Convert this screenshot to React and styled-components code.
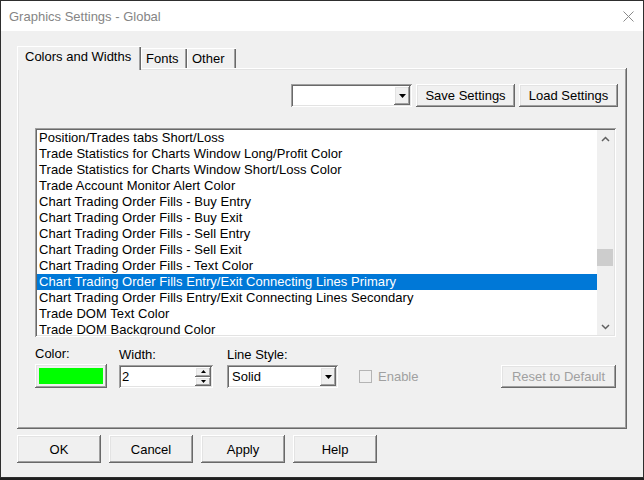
import React from "react";
import styled, { createGlobalStyle } from "styled-components";

const GlobalStyle = createGlobalStyle`
  html, body {
    margin: 0;
    padding: 0;
    background: #1f1f1f;
  }
  body {
    font-family: "Liberation Sans", Arial, sans-serif;
    font-size: 13px;
    color: #000;
  }
`;

// classic 3D edges
const raised = `
  box-shadow: inset -1px -1px #696969, inset 1px 1px #ffffff,
    inset -2px -2px #a0a0a0, inset 2px 2px #e3e3e3;
`;
const sunken = `
  box-shadow: inset 1px 1px #a0a0a0, inset -1px -1px #ffffff,
    inset 2px 2px #696969, inset -2px -2px #e3e3e3;
`;

const Window = styled.div`
  width: 644px;
  height: 478px;
  box-sizing: border-box;
  border: 1px solid #2e2e2e;
  background: #f0f0f0;
  display: flex;
  flex-direction: column;
`;

const TitleBar = styled.div`
  height: 30px;
  background: #fff;
  display: flex;
  align-items: center;
  justify-content: space-between;
  padding: 0 9px 0 8px;
`;

const Title = styled.span`
  font-size: 13px;
  color: #858585;
`;

const Body = styled.div`
  flex: 1;
  display: flex;
  flex-direction: column;
  padding: 15px 0 0 16px;
`;

const TabStrip = styled.div`
  display: flex;
  align-items: flex-start;
  height: 22px;
  position: relative;
  z-index: 1;
`;

const Tab = styled.div`
  box-sizing: border-box;
  width: ${(p) => p.$w}px;
  height: ${(p) => (p.$active ? 24 : 20)}px;
  margin-top: ${(p) => (p.$active ? 0 : 2)}px;
  padding-left: ${(p) => (p.$active ? 8 : 5)}px;
  padding-top: 3px;
  background: #f0f0f0;
  box-shadow: inset 1px 0 #ffffff, inset 0 1px #ffffff, inset -1px 0 #696969,
    inset -2px 0 #a0a0a0;
  white-space: nowrap;
`;

const Panel = styled.div`
  width: 610px;
  height: 361px;
  box-sizing: border-box;
  ${raised}
  display: flex;
  flex-direction: column;
  padding: 16px 0 0 18px;
`;

const Toolbar = styled.div`
  width: 583px;
  height: 23px;
  display: flex;
  justify-content: flex-end;
  gap: 4px;
`;

const Button = styled.button`
  box-sizing: border-box;
  width: ${(p) => p.$w}px;
  height: ${(p) => p.$h || 23}px;
  border: none;
  padding: 0;
  margin: 0;
  background: #f0f0f0;
  ${raised}
  font-family: "Liberation Sans", Arial, sans-serif;
  font-size: 13px;
  color: ${(p) => (p.disabled ? "#a0a0a0" : "#000")};
`;

const Combo = styled.div`
  box-sizing: border-box;
  width: ${(p) => p.$w}px;
  height: 23px;
  background: #fff;
  ${sunken}
  display: flex;
  align-items: center;
  padding: 2px;
`;

const ComboText = styled.span`
  flex: 1;
  padding-left: 3px;
`;

const DropButton = styled.div`
  box-sizing: border-box;
  width: 16px;
  height: 19px;
  background: #f0f0f0;
  ${raised}
  display: flex;
  align-items: center;
  justify-content: center;
`;

const ListBox = styled.div`
  box-sizing: border-box;
  width: 581px;
  height: 209px;
  margin-top: 21px;
  background: #fff;
  ${sunken}
  padding: 2px;
  display: flex;
`;

const Rows = styled.div`
  flex: 1;
  overflow: hidden;
`;

const Row = styled.div`
  height: 16px;
  line-height: 16px;
  padding-left: 2px;
  white-space: nowrap;
  letter-spacing: 0.05px;
  background: ${(p) => (p.$selected ? "#0078d7" : "transparent")};
  color: ${(p) => (p.$selected ? "#fff" : "#000")};
`;

const ScrollBar = styled.div`
  width: 17px;
  background: #f0f0f0;
  display: flex;
  flex-direction: column;
`;

const ScrollArrow = styled.div`
  height: 17px;
  display: flex;
  align-items: center;
  justify-content: center;
`;

const Track = styled.div`
  flex: 1;
`;

const Thumb = styled.div`
  height: 17px;
  margin: 0 1px 0 0;
  background: #cdcdcd;
`;

const ControlsRow = styled.div`
  width: 581px;
  margin-top: 9px;
  display: flex;
  align-items: flex-end;
`;

const Field = styled.div`
  display: flex;
  flex-direction: column;
  gap: 3px;
  margin-left: ${(p) => p.$ml || 0}px;
`;

const Label = styled.span`
  line-height: 15px;
`;

const ColorButton = styled.div`
  box-sizing: border-box;
  width: 72px;
  height: 24px;
  background: #f0f0f0;
  ${raised}
  padding: 4px;
`;

const Swatch = styled.div`
  height: 100%;
  background: ${(p) => p.$color};
`;

const Spinner = styled.div`
  box-sizing: border-box;
  width: 94px;
  height: 23px;
  background: #fff;
  ${sunken}
  padding: 2px;
  display: flex;
`;

const SpinValue = styled.span`
  flex: 1;
  line-height: 19px;
  padding-left: 1px;
`;

const SpinButtons = styled.div`
  width: 16px;
  display: flex;
  flex-direction: column;
`;

const SpinButton = styled.div`
  flex: 1;
  background: #f0f0f0;
  ${raised}
  display: flex;
  align-items: center;
  justify-content: center;
`;

const CheckWrap = styled.label`
  height: 23px;
  margin-left: 21px;
  display: flex;
  align-items: center;
  gap: 6px;
  color: #a0a0a0;
`;

const CheckBox = styled.span`
  box-sizing: border-box;
  width: 13px;
  height: 13px;
  border: 1px solid #b4b4b4;
  background: #f0f0f0;
`;

const ResetSlot = styled.div`
  margin-left: auto;
`;

const Footer = styled.div`
  display: flex;
  gap: 8px;
  margin-top: 6px;
`;

const DownTriangle = ({ w = 7, h = 4 }) => (
  <svg width={w} height={h} viewBox={`0 0 ${w} ${h}`}>
    <polygon points={`0,0 ${w},0 ${w / 2},${h}`} fill="#000" />
  </svg>
);

const UpTriangle = ({ w = 5, h = 3 }) => (
  <svg width={w} height={h} viewBox={`0 0 ${w} ${h}`}>
    <polygon points={`0,${h} ${w},${h} ${w / 2},0`} fill="#000" />
  </svg>
);

const Chevron = ({ up }) => (
  <svg width="9" height="6" viewBox="0 0 9 6">
    <polyline
      points={up ? "1,5 4.5,1.5 8,5" : "1,1 4.5,4.5 8,1"}
      fill="none"
      stroke="#606060"
      strokeWidth="1.5"
    />
  </svg>
);

const CloseIcon = () => (
  <svg width="11" height="11" viewBox="0 0 11 11">
    <path d="M0.5 0.5 L10.5 10.5 M10.5 0.5 L0.5 10.5" stroke="#8a8a8a" strokeWidth="1" />
  </svg>
);

const items = [
  "Position/Trades tabs Short/Loss",
  "Trade Statistics for Charts Window Long/Profit Color",
  "Trade Statistics for Charts Window Short/Loss Color",
  "Trade Account Monitor Alert Color",
  "Chart Trading Order Fills - Buy Entry",
  "Chart Trading Order Fills - Buy Exit",
  "Chart Trading Order Fills - Sell Entry",
  "Chart Trading Order Fills - Sell Exit",
  "Chart Trading Order Fills - Text Color",
  "Chart Trading Order Fills Entry/Exit Connecting Lines Primary",
  "Chart Trading Order Fills Entry/Exit Connecting Lines Secondary",
  "Trade DOM Text Color",
  "Trade DOM Background Color",
];

const selected = 9;
const scrollPos = 0.6;
const trackSpace = 171 - 17;

export default function App() {
  return (
    <>
      <GlobalStyle />
      <Window>
        <TitleBar>
          <Title>Graphics Settings - Global</Title>
          <CloseIcon />
        </TitleBar>
        <Body>
          <TabStrip>
            <Tab $active $w={124}>Colors and Widths</Tab>
            <Tab $w={46}>Fonts</Tab>
            <Tab $w={49}>Other</Tab>
          </TabStrip>
          <Panel>
            <Toolbar>
              <Combo $w={121}>
                <ComboText />
                <DropButton><DownTriangle /></DropButton>
              </Combo>
              <Button $w={99}>Save Settings</Button>
              <Button $w={99}>Load Settings</Button>
            </Toolbar>

            <ListBox>
              <Rows>
                {items.map((t, i) => (
                  <Row key={t} $selected={i === selected}>{t}</Row>
                ))}
              </Rows>
              <ScrollBar>
                <ScrollArrow><Chevron up /></ScrollArrow>
                <Track>
                  <Thumb style={{ marginTop: Math.round(trackSpace * scrollPos) + 10 }} />
                </Track>
                <ScrollArrow><Chevron /></ScrollArrow>
              </ScrollBar>
            </ListBox>

            <ControlsRow>
              <Field>
                <Label>Color:</Label>
                <ColorButton><Swatch $color="#00ff00" /></ColorButton>
              </Field>
              <Field $ml={12}>
                <Label>Width:</Label>
                <Spinner>
                  <SpinValue>2</SpinValue>
                  <SpinButtons>
                    <SpinButton><UpTriangle /></SpinButton>
                    <SpinButton><DownTriangle w={5} h={3} /></SpinButton>
                  </SpinButtons>
                </Spinner>
              </Field>
              <Field $ml={14}>
                <Label>Line Style:</Label>
                <Combo $w={111}>
                  <ComboText>Solid</ComboText>
                  <DropButton><DownTriangle /></DropButton>
                </Combo>
              </Field>
              <CheckWrap>
                <CheckBox />
                Enable
              </CheckWrap>
              <ResetSlot>
                <Button $w={115} disabled>Reset to Default</Button>
              </ResetSlot>
            </ControlsRow>
          </Panel>
          <Footer>
            <Button $w={84} $h={28}>OK</Button>
            <Button $w={84} $h={28}>Cancel</Button>
            <Button $w={84} $h={28}>Apply</Button>
            <Button $w={84} $h={28}>Help</Button>
          </Footer>
        </Body>
      </Window>
    </>
  );
}
